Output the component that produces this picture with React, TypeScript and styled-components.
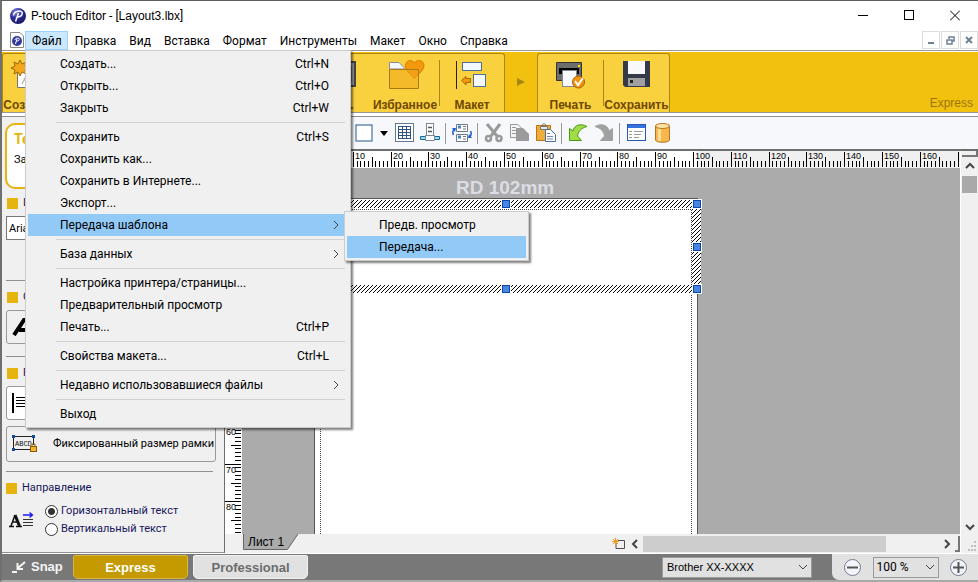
import React from "react";
import styled, { createGlobalStyle, css } from "styled-components";

const ui = `Roboto, "Open Sans", sans-serif`;
const arial = `"Liberation Sans", Arial, sans-serif`;

const GlobalStyle = createGlobalStyle`
  *, *::before, *::after { box-sizing: border-box; }
  body { margin: 0; background: #f0f0f0; }
  button, input, select { font: inherit; color: inherit; margin: 0; }
  svg { display: block; flex: none; }
`;

const Window = styled.div`
  display: flex;
  flex-direction: column;
  min-height: 100vh;
  border-top: 1px solid #5c5c5c;
  border-left: 2px solid #6f6f6f;
  border-bottom: 2px solid #a9a9a9;
  background: #f0f0f0;
  color: #000;
  font: 12px/16px ${ui};
  overflow: hidden;
`;

const TitleBar = styled.header`
  display: flex;
  align-items: center;
  height: 29px;
  padding-left: 8px;
  background: #fff;
`;

const Title = styled.h1`
  flex: 1;
  margin: 0 0 0 5px;
  font: 12px/16px ${ui};
  white-space: nowrap;
`;

const FileName = styled.span`
  font-family: ${arial};
`;

const CaptionButton = styled.button`
  display: grid;
  place-items: center;
  width: 46px;
  height: 28px;
  padding: 0;
  border: 0;
  background: none;
`;

const MenuBar = styled.nav`
  display: flex;
  align-items: center;
  height: 20px;
  padding-left: 8px;
  background: #fff;
`;

const MenuSlot = styled.div`
  position: relative;
`;

const MenuTitle = styled.button<{ $open?: boolean }>`
  display: block;
  height: 19px;
  padding: 2px 5px 0 6px;
  border: 1px solid ${(p) => (p.$open ? "#99d1ff" : "transparent")};
  background: ${(p) => (p.$open ? "#cce8ff" : "none")};
  line-height: 15px;
  white-space: nowrap;
`;

const DocIcon = styled.div`
  width: 15px;
`;

const MdiButtons = styled.div`
  display: flex;
  gap: 1px;
  margin-left: auto;
`;

const MdiButton = styled.button`
  display: grid;
  place-items: center;
  width: 18px;
  height: 18px;
  padding: 0;
  border: 1px solid #dcdcdc;
  background: #fff;
`;

const popup = css`
  position: absolute;
  margin: 0;
  padding: 2px;
  border: 1px solid #ccc;
  background: #f0f0f0;
  box-shadow: 2px 2px 2px rgba(0, 0, 0, 0.5);
  list-style: none;
`;

const DropMenu = styled.ul`
  ${popup}
  top: 19px;
  left: 0;
  z-index: 5;
  width: 326px;
`;

const SubMenu = styled.ul`
  ${popup}
  top: -3px;
  left: 316px;
  z-index: 6;
  width: 185px;
`;

const MenuRow = styled.li`
  position: relative;
`;

const MenuItem = styled.button<{ $active?: boolean }>`
  display: flex;
  align-items: center;
  width: 100%;
  height: 22px;
  padding: 0 5px 0 32px;
  border: 0;
  background: ${(p) => (p.$active ? "#91c9f7" : "none")};
  text-align: left;
  white-space: nowrap;
`;

const Shortcut = styled.span`
  margin-left: auto;
  padding-right: 14px;
`;

const Chevron = styled.span`
  margin-left: auto;
  padding-right: 2px;
`;

const MenuLine = styled.li`
  height: 1px;
  margin: 3px 3px 3px 28px;
  background: #d2d2d2;
`;

const RibbonFrame = styled.div`
  display: flex;
  height: 67px;
  padding: 1px 0 3px;
  border-top: 1px solid #999;
  background: #fff;
  border-bottom: 1px solid #8f8f8f;
`;

const Ribbon = styled.div`
  display: flex;
  flex: 1;
  border-bottom: 1px solid #969696;
  background: #f2c00f;
`;

const RibbonGroup = styled.div<{ $wide?: boolean }>`
  display: flex;
  width: ${(p) => (p.$wide ? "503px" : "133px")};
  margin-top: 1px;
  border: 1px solid #a88612;
  border-bottom: 0;
  border-radius: 3px 3px 0 0;
  background: #f9d13f;
`;

const RibbonButton = styled.button<{ $w: number }>`
  display: flex;
  flex-direction: column;
  align-items: center;
  justify-content: space-between;
  width: ${(p) => p.$w}px;
  padding: 6px 0 0;
  border: 0;
  background: none;
  color: #704800;
  font: bold 12px/14px ${arial};
  white-space: nowrap;
`;

const RibbonLine = styled.div`
  width: 1px;
  height: 46px;
  margin-top: 6px;
  background: #a88612;
`;

const Fill = styled.div`
  flex: 1;
`;

const RibbonArrow = styled.div`
  display: grid;
  place-items: center;
  width: 32px;
`;

const RibbonMode = styled.div`
  align-self: flex-end;
  margin-left: auto;
  padding: 0 5px 1px 0;
  color: #9a7608;
  font: 12px/16px ${arial};
`;

const Body = styled.div`
  display: flex;
  flex: 1;
  border-bottom: 1px solid #fff;
`;

const Panel = styled.aside`
  display: flex;
  flex-direction: column;
  width: 223px;
  padding: 6px 8px 0 3px;
  border-right: 1px solid #6e6e6e;
  border-bottom: 1px solid #8f8f8f;
  font: 11px/14px ${ui};
`;

const Hint = styled.section`
  height: 66px;
  margin-bottom: 7px;
  padding: 4px 7px;
  border: 2px solid #e6b40f;
  border-radius: 10px;
  background: #fff;
  line-height: 22px;
`;

const HintTitle = styled.h2`
  margin: 0;
  color: #e6b40f;
  font: bold 14px/20px ${ui};
`;

const Section = styled.section<{ $h: number }>`
  display: flex;
  flex-direction: column;
  gap: 6px;
  height: ${(p) => p.$h}px;
  margin-left: 1px;
`;

const Heading = styled.h3`
  display: flex;
  align-items: center;
  gap: 5px;
  height: 14px;
  margin: 0;
  padding-left: 1px;
  color: #16165c;
  font: 11px/14px ${ui};

  &::before {
    content: "";
    width: 11px;
    height: 11px;
    background: #e6b40f;
  }
`;

const Rule = styled.hr`
  width: 207px;
  height: 1px;
  margin: 0 0 9px 1px;
  border: 0;
  background: #8f8f8f;
`;

const FontBox = styled.input`
  width: 200px;
  height: 24px;
  padding: 0 2px;
  border: 1px solid #777;
  background: #fff;
`;

const PanelButton = styled.button<{ $white?: boolean; $wide?: boolean }>`
  display: flex;
  align-items: center;
  gap: 12px;
  width: ${(p) => (p.$wide ? "210px" : "34px")};
  min-height: ${(p) => (p.$wide ? "36px" : "34px")};
  padding: 0 5px;
  border: 1px solid #999;
  border-radius: 3px;
  background: ${(p) => (p.$white ? "#fff" : "#f0f0f0")};
  white-space: nowrap;
`;

const Direction = styled.div`
  display: flex;
  align-items: center;
  gap: 10px;
  padding: 7px 0 0 4px;
`;

const Radios = styled.div`
  display: flex;
  flex-direction: column;
`;

const RadioLabel = styled.label`
  display: flex;
  align-items: center;
  gap: 3px;
  height: 18px;
  color: #16165c;
  white-space: nowrap;
`;

const Radio = styled.input`
  appearance: none;
  width: 13px;
  height: 13px;
  border: 1px solid #333;
  border-radius: 50%;
  background: #fff;

  &:checked {
    background: radial-gradient(circle, #333 0 3px, #fff 4px);
  }
`;

const Editor = styled.main`
  display: flex;
  flex: 1;
  flex-direction: column;
  min-width: 0;
`;

const Toolbar = styled.div`
  display: flex;
  align-items: center;
  height: 34px;
  padding-left: 126px;
  border-bottom: 2px solid #6e6e6e;
  background: #f6f8fb;
`;

const Tool = styled.button<{ $narrow?: boolean }>`
  display: grid;
  place-items: center;
  width: ${(p) => (p.$narrow ? "14px" : "26px")};
  height: 28px;
  padding: 0;
  border: 0;
  background: none;
`;

const ToolLine = styled.div`
  width: 1px;
  height: 21px;
  margin: 0 3px 0 2px;
  background: #999;
`;

const Work = styled.div`
  display: flex;
  flex: 1;
`;

const WorkMain = styled.div`
  display: flex;
  flex: 1;
  flex-direction: column;
  min-width: 0;
`;

const TopRuler = styled.div`
  height: 17px;
  overflow: hidden;
`;

const CanvasRow = styled.div`
  display: flex;
  flex: 1;
  min-height: 300px;
`;

const SideRuler = styled.div`
  width: 17px;
  overflow: hidden;
`;

const Canvas = styled.div`
  position: relative;
  flex: 1;
  overflow: hidden;
  background: #ababab;
`;

const TapeName = styled.div`
  position: absolute;
  top: 9px;
  left: 214px;
  color: #dcdde4;
  font: bold 19px/22px ${arial};
`;

const Page = styled.div`
  position: absolute;
  top: 30px;
  bottom: 0;
  left: 72px;
  width: 384px;
  padding: 0 5px;
  border: 1px solid #555;
  border-bottom: 0;
  background: #fff;
`;

const PageMargin = styled.div`
  height: 100%;
  border-right: 1px dotted #444;
  border-left: 1px dotted #444;
`;

const Frame = styled.div`
  position: absolute;
  top: 31px;
  left: 69px;
  width: 390px;
  height: 95px;
`;

const FrameHandle = styled.span<{ $x: number; $y: number }>`
  position: absolute;
  top: ${(p) => p.$y}px;
  left: ${(p) => p.$x}px;
  width: 8px;
  height: 8px;
  border: 1px solid #0a48b0;
  outline: 1px solid #fff;
  background: #4a86e0;
`;

const BottomRow = styled.div`
  display: flex;
  align-items: center;
  height: 19px;
`;

const SheetTab = styled.button`
  position: relative;
  width: 56px;
  height: 17px;
  margin: 0 0 2px 18px;
  padding: 0 12px 0 5px;
  border: 0;
  background: none;
  font: 12px/15px ${arial};
  text-align: left;
  white-space: nowrap;
`;

const TabShape = styled.svg`
  position: absolute;
  inset: 0;
`;

const TabText = styled.span`
  position: relative;
`;

const ScrollButton = styled.button`
  display: grid;
  place-items: center;
  width: 17px;
  height: 17px;
  padding: 0;
  border: 0;
  background: none;
`;

const HTrack = styled.div`
  width: 295px;
  height: 16px;
`;

const HThumb = styled.div`
  width: 243px;
  height: 16px;
  background: #cdcdcd;
`;

const Splitter = styled.div<{ $across?: boolean }>`
  width: ${(p) => (p.$across ? "16px" : "5px")};
  height: ${(p) => (p.$across ? "6px" : "16px")};
  border-right: 2px solid #777;
  border-bottom: 2px solid #777;
  background: #f0f0f0;
`;

const VScroll = styled.div`
  display: flex;
  flex-direction: column;
  align-items: center;
  width: 18px;
  border-left: 1px solid #fff;
`;

const VThumb = styled.div`
  width: 15px;
  height: 17px;
  margin-top: 2px;
  background: #a9a9a9;
`;

const Status = styled.footer`
  display: flex;
  height: 26px;
  background: #787878;
`;

const Snap = styled.button`
  display: flex;
  align-items: center;
  gap: 5px;
  width: 71px;
  padding: 0 0 0 10px;
  border: 0;
  background: none;
  color: #f4f4f4;
  font: bold 13px/16px ${arial};
`;

const ModeTab = styled.button<{ $on?: boolean }>`
  width: 115px;
  height: 24px;
  margin: 1px 5px 0 0;
  padding: 1px 0 0;
  border: 1px solid ${(p) => (p.$on ? "#dcb63a" : "#f2f2f2")};
  border-radius: 2px 2px 5px 5px;
  background: ${(p) => (p.$on ? "#c49a00" : "#e1e1e1")};
  color: ${(p) => (p.$on ? "#fff" : "#6c6c6c")};
  font: bold 13px/20px ${arial};
`;

const SelectBox = styled.div<{ $w: number }>`
  display: flex;
  align-items: center;
  width: ${(p) => p.$w}px;
  height: 21px;
  padding-right: 3px;
  border: 1px solid #9b9b9b;
  background: #e1e1e1;
`;

const Select = styled.select`
  appearance: none;
  flex: 1;
  min-width: 0;
  height: 19px;
  padding: 0 4px;
  border: 0;
  background: none;
  font: 11px/17px ${arial};
`;

const PercentSelect = styled(Select)`
  padding: 0 3px;
  font: 12px/17px ${ui};
`;

const Printer = styled.div`
  display: flex;
  align-items: center;
  margin: 0 20px 0 auto;
`;

const ZoomArea = styled.div`
  display: flex;
  align-items: center;
  justify-content: space-between;
  width: 146px;
  padding: 0 11px 0 12px;
  border-radius: 0 0 0 7px;
  background: #e1e1e1;
`;

const ZoomButton = styled.button`
  display: grid;
  place-items: center;
  width: 17px;
  height: 17px;
  padding: 0;
  border: 1px solid #727a8c;
  border-radius: 50%;
  background: #f3f5fb;
`;

const Arrow = ({ d, size = 10, w = 2 }: { d: "up" | "down" | "left" | "right"; size?: number; w?: number }) => {
  const paths = { up: "M1 7L5 3L9 7", down: "M1 3L5 7L9 3", left: "M7 1L3 5L7 9", right: "M3 1L7 5L3 9" };
  return (
    <svg width={size} height={size} viewBox="0 0 10 10" fill="none" stroke="#444" strokeWidth={w}>
      <path d={paths[d]} />
    </svg>
  );
};

const AppLogo = ({ size }: { size: number }) => (
  <svg width={size} height={size} viewBox="0 0 16 16">
    <defs>
      <radialGradient id="ball" cx="0.35" cy="0.25" r="0.8">
        <stop offset="0" stopColor="#7d83d8" />
        <stop offset="0.5" stopColor="#2c2f98" />
        <stop offset="1" stopColor="#15155e" />
      </radialGradient>
    </defs>
    <circle cx="8" cy="8" r="8" fill="url(#ball)" />
    <path d="M5.500 13.500L8.500 5M3.500 7.500C3.500 3 12.500 1.500 12.300 5.200C12 8.500 8.500 9.200 7.200 8.700" fill="none" stroke="#fff" strokeWidth="1.500" />
  </svg>
);

type Entry = { text: string; keys?: string; sub?: boolean; open?: boolean } | null;

const fileMenu: Entry[] = [
  { text: "Создать...", keys: "Ctrl+N" },
  { text: "Открыть...", keys: "Ctrl+O" },
  { text: "Закрыть", keys: "Ctrl+W" },
  null,
  { text: "Сохранить", keys: "Ctrl+S" },
  { text: "Сохранить как..." },
  { text: "Сохранить в Интернете..." },
  { text: "Экспорт..." },
  { text: "Передача шаблона", sub: true, open: true },
  null,
  { text: "База данных", sub: true },
  null,
  { text: "Настройка принтера/страницы..." },
  { text: "Предварительный просмотр" },
  { text: "Печать...", keys: "Ctrl+P" },
  null,
  { text: "Свойства макета...", keys: "Ctrl+L" },
  null,
  { text: "Недавно использовавшиеся файлы", sub: true },
  null,
  { text: "Выход" },
];

const menus = ["Правка", "Вид", "Вставка", "Формат", "Инструменты", "Макет", "Окно", "Справка"];

const FileMenu = () => (
  <DropMenu>
    {fileMenu.map((e, i) =>
      e === null ? (
        <MenuLine key={i} />
      ) : (
        <MenuRow key={i}>
          <MenuItem $active={e.open}>
            {e.text}
            {e.keys && <Shortcut>{e.keys}</Shortcut>}
            {e.sub && (
              <Chevron>
                <Arrow d="right" size={10} w={1} />
              </Chevron>
            )}
          </MenuItem>
          {e.open && (
            <SubMenu>
              <li><MenuItem>Предв. просмотр</MenuItem></li>
              <li><MenuItem $active>Передача...</MenuItem></li>
            </SubMenu>
          )}
        </MenuRow>
      )
    )}
  </DropMenu>
);

const MM = 3.78;
const marks = Array.from({ length: 171 }, (_, i) => i);

const HorizontalScale = () => {
  const zero = 90;
  return (
    <svg width="100%" height="17" shapeRendering="crispEdges">
      <rect width="100%" height="17" fill="#f0f0f0" />
      <rect x={zero} width="382" height="17" fill="#fff" />
      {marks.map((m) => {
        const x = Math.round(zero + m * MM);
        const top = m % 10 === 0 ? 1 : m % 5 === 0 ? 6 : 10;
        return <rect key={m} x={x} y={top} width="1" height={16 - top} fill="#000" />;
      })}
      {marks.filter((m) => m % 10 === 0 && m < 170).map((m) => (
        <text key={m} x={Math.round(zero + m * MM) + 2} y="8" fontSize="9" fontFamily="Liberation Sans, sans-serif">{m}</text>
      ))}
    </svg>
  );
};

const VerticalScale = () => {
  const zero = 31;
  return (
    <svg width="17" height="366" shapeRendering="crispEdges">
      <rect width="17" height="366" fill="#fff" />
      {marks.slice(0, 89).map((m) => {
        const left = m % 10 === 0 ? 0 : m % 5 === 0 ? 6 : 10;
        return <rect key={m} x={left} y={Math.round(zero + m * MM)} width={16 - left} height="1" fill="#000" />;
      })}
      {marks.filter((m) => m % 10 === 0 && m < 89).map((m) => (
        <text key={m} x="1" y={Math.round(zero + m * MM) + 9} fontSize="9" fontFamily="Liberation Sans, sans-serif">{m}</text>
      ))}
    </svg>
  );
};

const HatchedBorder = () => (
  <svg width="390" height="95" shapeRendering="crispEdges">
    <defs>
      <pattern id="hatch" width="4" height="4" patternUnits="userSpaceOnUse">
        <rect width="4" height="4" fill="#fff" />
        <path d="M0 3h1v1h-1zM1 2h1v1h-1zM2 1h1v1h-1zM3 0h1v1h-1z" fill="#000" />
      </pattern>
    </defs>
    <rect width="390" height="95" fill="#fff" />
    <rect y="1" width="390" height="93" fill="url(#hatch)" />
    <rect x="9" y="9" width="372" height="77" fill="#fff" />
    <path d="M9 10.500H380.500V86" fill="none" stroke="#444" strokeDasharray="1 1" />
  </svg>
);

const CreateIcon = () => (
  <svg width="34" height="32" viewBox="3 0 34 32">
    <path d="M9.500 4.500H33.500V27.500H9.500Z" fill="#fff" stroke="#777" />
    <path d="M14 24L21 10L25 24M16 20H23" fill="none" stroke="#bbb" strokeWidth="1.500" />
    <path d="M12 0L14 4L18 2L17 6L20 8L17 10L18 14L14 12L12 16L10 12L6 14L7 10L3 8L7 6L6 2L10 4Z" fill="#f2a71c" stroke="#a36608" />
  </svg>
);

const ScreenIcon = () => (
  <svg width="30" height="32" viewBox="0 0 30 32">
    <rect x="1" y="2" width="28" height="24" fill="#999" stroke="#444" strokeWidth="2" />
    <rect x="5" y="6" width="20" height="16" fill="#eee" stroke="#444" />
  </svg>
);

const FavoritesIcon = () => (
  <svg width="42" height="32" viewBox="-3 1 42 32">
    <path d="M2.500 10V3.500H12L17 8.500V10Z" fill="#f4f7fd" stroke="#8b8ba0" />
    <path d="M27.500 19.500C22 14 18.500 11 18.500 7C18.500 1 25 0 27.500 4C30 0 37 1 37 6.500C37 11 32 14.500 27.500 19.500Z" fill="#f4990c" stroke="#d87a00" />
    <path d="M2.500 10.500H31.500V29.500H2.500Z" fill="#f0a818" fillOpacity="0.550" stroke="#a87a14" />
  </svg>
);

const LayoutIcon = () => (
  <svg width="32" height="32" viewBox="1 0 32 32">
    <path d="M1.500 1V29" stroke="#222" />
    <rect x="7.500" y="2.500" width="19" height="8" fill="#f4f8ff" stroke="#4b7296" />
    <rect x="18.500" y="14.500" width="12" height="12" fill="#f4f8ff" stroke="#4b7296" />
    <path d="M6.500 20.500L11 16.500V18.500H15.500V22.500H11V25Z" fill="#f29a10" stroke="#ac6500" />
  </svg>
);

const PrintIcon = () => (
  <svg width="32" height="32" viewBox="1 0 32 32">
    <path d="M2.500 2.500H27.500V20.500H2.500Z" fill="#6d6d6d" stroke="#333" />
    <rect x="5" y="8" width="20" height="6" fill="#000" />
    <rect x="24" y="5" width="2" height="2" fill="#ffe000" />
    <rect x="8.500" y="10.500" width="14" height="16" fill="#f8faff" stroke="#83889a" />
    <circle cx="24.500" cy="22" r="6" fill="#ef9210" stroke="#a86400" />
    <path d="M21 21L24 25L29 18" fill="none" stroke="#fff" strokeWidth="2" />
  </svg>
);

const SaveIcon = () => (
  <svg width="28" height="32" viewBox="0 0 28 32">
    <path d="M0 1H27V27H2L0 25Z" fill="#343a46" />
    <rect x="5" y="1" width="17" height="13" fill="#f8f8fb" />
    <rect x="5" y="18" width="17" height="8" fill="#a0a0a0" />
    <rect x="7" y="20" width="3" height="3" fill="#222" />
  </svg>
);

const BoxTool = () => (
  <svg width="18" height="18"><rect x="1" y="1" width="16" height="16" fill="#fff" stroke="#23568c" /></svg>
);
const CaretTool = () => (
  <svg width="8" height="5"><path d="M0 0H8L4 5Z" fill="#000" /></svg>
);
const TableTool = () => (
  <svg width="20" height="20" viewBox="-1 0 20 20" fill="none">
    <rect x="0.500" y="0.500" width="18" height="18" fill="#fff" stroke="#66798e" />
    <path d="M3 3.500H16M3 6.500H16M3 9.500H16M3 12.500H16M3 15.500H16M3.500 3V16M7.500 3V16M11.500 3V16M15.500 3V16" stroke="#2d5480" />
  </svg>
);
const AlignTool = () => (
  <svg width="20" height="20" viewBox="0 0 20 20">
    <rect x="6.500" y="0.500" width="7" height="14" fill="#fff" stroke="#77889a" />
    <path d="M8 4.500H12M8 8.500H12" stroke="#555" strokeWidth="1.500" />
    <path d="M0.500 13.500H5.500V16.500H0.500ZM14.500 13.500H19.500V16.500H14.500Z" fill="#8fdcf8" stroke="#146894" />
    <path d="M5.500 12.500H14.500V17.500H5.500Z" fill="#fff" stroke="#77889a" />
  </svg>
);
const RotateTool = () => (
  <svg width="20" height="20" viewBox="0 0 20 20" fill="none">
    <path d="M4.500 1.500H15.500V8.500H4.500ZM4.500 11.500H15.500V18.500H4.500Z" fill="#fff" stroke="#66798e" />
    <path d="M6 4H9M6 14H9" stroke="#4b83c8" strokeWidth="3" />
    <path d="M11 3.500H14M11 6H14M11 13.500H14M11 16H14" stroke="#777" />
    <path d="M1.500 12C0.500 10 0.500 8 2 6.500M18.500 8C19.500 10 19.500 12 18 13.500" stroke="#1e5ed0" strokeWidth="1.500" />
    <path d="M0 5L4 5L3 9ZM20 15L16 15L17 11Z" fill="#1e5ed0" />
  </svg>
);
const CutTool = () => (
  <svg width="20" height="20" viewBox="0 0 20 20" fill="none" stroke="#9a9a9a">
    <path d="M3 1L13 13M16 1L7 13" strokeWidth="3" />
    <ellipse cx="4.500" cy="15.500" rx="2.500" ry="2.500" strokeWidth="2.500" />
    <ellipse cx="15" cy="15.500" rx="2.500" ry="2.500" strokeWidth="2.500" />
  </svg>
);
const CopyTool = () => (
  <svg width="20" height="20" viewBox="0 0 20 20">
    <path d="M0.500 1.500H8L11.500 5V14.500H0.500Z" fill="#f4f4f4" stroke="#999" />
    <path d="M2 4.500H6M2 7.500H6M2 10.500H6" stroke="#999" />
    <path d="M6 5H13L19 11V18H6Z" fill="#9b9b9b" />
  </svg>
);
const PasteTool = () => (
  <svg width="20" height="20" viewBox="0 0 20 20">
    <path d="M0.500 2.500H14.500V17.500H0.500Z" fill="#efad3a" stroke="#b9741c" />
    <path d="M4.500 3.500H11.500V6.500H4.500Z" fill="#e8e8e8" stroke="#777" />
    <path d="M6 3C6 0 10 0 10 3" fill="none" stroke="#777" />
    <path d="M9.500 6.500H14.500L19.500 11.500V18.500H9.500Z" fill="#fff" stroke="#4d6f94" />
    <path d="M11 10.500H14M11 13.500H17M11 16H17" stroke="#6c88a8" />
  </svg>
);
const TurnArrow = ({ redo }: { redo?: boolean }) => (
  <svg width="20" height="20" viewBox="0 0 20 20">
    <path
      d={redo ? "M1 3.500C7 0 14 2 15 8L18.500 5.500V17.500H6.500L10.500 13C10 9 7 5 1 3.500Z" : "M19 3.500C13 0 6 2 5 8L1.500 5.500V17.500H13.500L9.500 13C10 9 13 5 19 3.500Z"}
      fill={redo ? "#a0a0a0" : "#9fdc48"}
      stroke={redo ? "#a0a0a0" : "#4c9a14"}
    />
  </svg>
);
const FormTool = () => (
  <svg width="20" height="18" viewBox="-1 0 20 18">
    <rect x="0.500" y="0.500" width="18" height="16" fill="#fff" stroke="#2858b8" />
    <rect x="1" y="1" width="17" height="3" fill="#3470de" />
    <path d="M2 7.500H5M2 10.500H5M2 13.500H5M7 7.500H16M7 10.500H14M7 13.500H12" stroke="#999" />
  </svg>
);
const DataTool = () => (
  <svg width="16" height="20" viewBox="-1 0 16 20">
    <path d="M0.500 3V17C1 20 14 20 14.500 17V3Z" fill="#f6b84c" stroke="#b87420" />
    <path d="M3 5V18H6V5Z" fill="#fbdb98" />
    <ellipse cx="7.500" cy="3" rx="7" ry="2.500" fill="#fbe2a4" stroke="#b87420" />
  </svg>
);

const FixedIcon = () => (
  <svg width="29" height="20" viewBox="0 0 29 20" fill="none">
    <path d="M2 2.500H22M2 15.500H18M1.500 3V15M21.500 3V11" stroke="#222" />
    <path d="M0 1H3V4H0ZM20 1H23V4H20ZM0 14H3V17H0Z" fill="#164a9c" />
    <text x="3" y="12" fontSize="7" fontFamily="Liberation Mono, monospace" fill="#111">ABCD</text>
    <rect x="18.500" y="12.500" width="6" height="5" fill="#f1b62a" stroke="#8a5c08" />
    <path d="M20 12V10H23V12" stroke="#8a5c08" />
  </svg>
);

const handles = [
  { x: 191, y: 1 },
  { x: 382, y: 1 },
  { x: 382, y: 44 },
  { x: 382, y: 86 },
  { x: 191, y: 86 },
];

export default function App() {
  return (
    <>
      <GlobalStyle />
      <Window>
        <TitleBar>
          <AppLogo size={16} />
          <Title>P-touch Editor - [<FileName>Layout3.lbx</FileName>]</Title>
          <CaptionButton aria-label="Свернуть">
            <svg width="10" height="11"><path d="M0 5.500H10" stroke="#000" /></svg>
          </CaptionButton>
          <CaptionButton aria-label="Развернуть">
            <svg width="10" height="11"><rect x="0.500" y="0.500" width="9" height="9" fill="none" stroke="#000" /></svg>
          </CaptionButton>
          <CaptionButton aria-label="Закрыть">
            <svg width="10" height="11"><path d="M0 0.500L10 10.500M10 0.500L0 10.500" stroke="#000" /></svg>
          </CaptionButton>
        </TitleBar>

        <MenuBar>
          <DocIcon>
            <svg width="14" height="16" viewBox="0 0 14 16">
              <path d="M0.500 0.500H10L13.500 4V15.500H0.500Z" fill="#fff" stroke="#888" />
              <circle cx="7" cy="9" r="5" fill="#34379c" />
              <path d="M5.500 12L7 6.500M5 8C5 5.500 9.500 5.500 9.300 7.500C9 9 7.500 9 6.500 9" fill="none" stroke="#fff" />
            </svg>
          </DocIcon>
          <MenuSlot>
            <MenuTitle $open>Файл</MenuTitle>
            <FileMenu />
          </MenuSlot>
          {menus.map((m) => (
            <MenuTitle key={m}>{m}</MenuTitle>
          ))}
          <MdiButtons>
            <MdiButton aria-label="Свернуть документ">
              <svg width="8" height="8"><path d="M1 7H7" stroke="#6f8094" strokeWidth="2" /></svg>
            </MdiButton>
            <MdiButton aria-label="Восстановить документ">
              <svg width="9" height="9" fill="none" stroke="#6f8094"><path d="M3 3V1H8V5H6M1 4H6V8H1Z" strokeWidth="1.500" /></svg>
            </MdiButton>
            <MdiButton aria-label="Закрыть документ">
              <svg width="8" height="8"><path d="M1 1L7 7M7 1L1 7" stroke="#6f8094" strokeWidth="2" /></svg>
            </MdiButton>
          </MdiButtons>
        </MenuBar>

        <RibbonFrame>
          <Ribbon>
            <RibbonGroup $wide>
              <RibbonButton $w={50}><CreateIcon />Создать</RibbonButton>
              <Fill />
              <RibbonButton $w={60}><ScreenIcon />Экр.</RibbonButton>
              <RibbonButton $w={68}><FavoritesIcon />Избранное</RibbonButton>
              <RibbonLine />
              <RibbonButton $w={64}><LayoutIcon />Макет</RibbonButton>
            </RibbonGroup>
            <RibbonArrow>
              <svg width="8" height="8"><path d="M0 0L8 4L0 8Z" fill="#a88612" /></svg>
            </RibbonArrow>
            <RibbonGroup>
              <RibbonButton $w={65}><PrintIcon />Печать</RibbonButton>
              <RibbonLine />
              <RibbonButton $w={65}><SaveIcon />Сохранить</RibbonButton>
            </RibbonGroup>
            <RibbonMode>Express</RibbonMode>
          </Ribbon>
        </RibbonFrame>

        <Body>
          <Panel>
            <Hint>
              <HintTitle>Те</HintTitle>
              За
            </Hint>
            <Section $h={84}>
              <Heading>Ш</Heading>
              <FontBox aria-label="Шрифт" defaultValue="Arial" />
            </Section>
            <Rule />
            <Section $h={66}>
              <Heading>С</Heading>
              <PanelButton aria-label="Стиль текста">
                <svg width="24" height="18" viewBox="0 0 24 18"><path d="M2 17L12 2H18L22 17M7 12H19" fill="none" stroke="#000" strokeWidth="4" /></svg>
              </PanelButton>
            </Section>
            <Rule />
            <Section $h={105}>
              <Heading>Р</Heading>
              <PanelButton $white aria-label="По левому краю">
                <svg width="24" height="20" viewBox="0 0 24 20" stroke="#000"><path d="M1 0V20" strokeWidth="2" /><path d="M4 4.500H20M4 7.500H20M4 10.500H20M4 13.500H14" /></svg>
              </PanelButton>
              <PanelButton $wide><FixedIcon />Фиксированный размер рамки</PanelButton>
            </Section>
            <Rule />
            <Heading>Направление</Heading>
            <Direction>
              <svg width="26" height="18" viewBox="0 0 26 18">
                <path d="M0 15.500H5M7 15.500H13M2 15L6 4M4 11H9" fill="none" stroke="#111" strokeWidth="1.500" />
                <path d="M6 4L10.500 15" stroke="#111" strokeWidth="3" />
                <path d="M14 8.500H24M14 11.500H24M14 14.500H24" stroke="#333" />
                <path d="M14 4H23M20.500 1.500L23.500 4L20.500 6.500" fill="none" stroke="#1818e8" strokeWidth="1.300" />
              </svg>
              <Radios>
                <RadioLabel><Radio type="radio" name="dir" defaultChecked />Горизонтальный текст</RadioLabel>
                <RadioLabel><Radio type="radio" name="dir" />Вертикальный текст</RadioLabel>
              </Radios>
            </Direction>
          </Panel>

          <Editor>
            <Toolbar>
              <Tool aria-label="Рамка"><BoxTool /></Tool>
              <Tool $narrow aria-label="Вид рамки"><CaretTool /></Tool>
              <Tool aria-label="Таблица"><TableTool /></Tool>
              <Tool aria-label="Выравнивание"><AlignTool /></Tool>
              <ToolLine />
              <Tool aria-label="Поворот"><RotateTool /></Tool>
              <ToolLine />
              <Tool aria-label="Вырезать"><CutTool /></Tool>
              <Tool aria-label="Копировать"><CopyTool /></Tool>
              <Tool aria-label="Вставить"><PasteTool /></Tool>
              <ToolLine />
              <Tool aria-label="Отменить"><TurnArrow /></Tool>
              <Tool aria-label="Повторить"><TurnArrow redo /></Tool>
              <ToolLine />
              <Tool aria-label="Свойства"><FormTool /></Tool>
              <Tool aria-label="База данных"><DataTool /></Tool>
            </Toolbar>
            <Work>
              <WorkMain>
                <TopRuler><HorizontalScale /></TopRuler>
                <CanvasRow>
                  <SideRuler><VerticalScale /></SideRuler>
                  <Canvas>
                    <TapeName>RD 102mm</TapeName>
                    <Page><PageMargin /></Page>
                    <Frame>
                      <HatchedBorder />
                      {handles.map((h) => (
                        <FrameHandle key={`${h.x}-${h.y}`} $x={h.x} $y={h.y} />
                      ))}
                    </Frame>
                  </Canvas>
                </CanvasRow>
                <BottomRow>
                  <SheetTab>
                    <TabShape width="56" height="17">
                      <path d="M0.500 0V15.500H44.500L55 0Z" fill="#ababab" />
                      <path d="M0.500 0V15.500H44.500L55 0" fill="none" stroke="#666" />
                    </TabShape>
                    <TabText>Лист 1</TabText>
                  </SheetTab>
                  <Fill />
                  <svg width="14" height="12" viewBox="0 0 14 12" fill="none">
                    <path d="M4 4V10.500H12.500V2.500H6" stroke="#554a50" />
                    <path d="M3.500 0V7M0 3.500H7M1 1L6 6M6 1L1 6" stroke="#ee9a20" />
                  </svg>
                  <ScrollButton aria-label="Влево"><Arrow d="left" /></ScrollButton>
                  <HTrack><HThumb /></HTrack>
                  <ScrollButton aria-label="Вправо"><Arrow d="right" /></ScrollButton>
                  <Splitter />
                </BottomRow>
              </WorkMain>
              <VScroll>
                <Splitter $across />
                <ScrollButton aria-label="Вверх"><Arrow d="up" /></ScrollButton>
                <VThumb />
                <Fill />
                <ScrollButton aria-label="Вниз"><Arrow d="down" /></ScrollButton>
                <svg width="16" height="18" fill="#bdbdbd">
                  <path d="M12 6h2v2h-2zM9 10h2v2h-2zM12 10h2v2h-2zM6 14h2v2h-2zM9 14h2v2h-2zM12 14h2v2h-2z" />
                </svg>
              </VScroll>
            </Work>
          </Editor>
        </Body>

        <Status>
          <Snap>
            <svg width="14" height="14" viewBox="0 0 14 14" fill="none" stroke="#f4f4f4" strokeWidth="2">
              <path d="M13 2L6 8M5.500 3V9H11M0 12H5" />
            </svg>
            Snap
          </Snap>
          <ModeTab $on>Express</ModeTab>
          <ModeTab>Professional</ModeTab>
          <Printer>
            <SelectBox $w={150}>
              <Select aria-label="Принтер"><option>Brother XX-XXXX</option></Select>
              <Arrow d="down" w={1} />
            </SelectBox>
          </Printer>
          <ZoomArea>
            <ZoomButton aria-label="Уменьшить"><svg width="11" height="11"><path d="M0 5.500H11" stroke="#555" strokeWidth="2" /></svg></ZoomButton>
            <SelectBox $w={66}>
              <PercentSelect aria-label="Масштаб"><option>100 %</option></PercentSelect>
              <Arrow d="down" w={1} />
            </SelectBox>
            <ZoomButton aria-label="Увеличить"><svg width="11" height="11"><path d="M0 5.500H11M5.500 0V11" stroke="#555" strokeWidth="2" /></svg></ZoomButton>
          </ZoomArea>
        </Status>
      </Window>
    </>
  );
}
